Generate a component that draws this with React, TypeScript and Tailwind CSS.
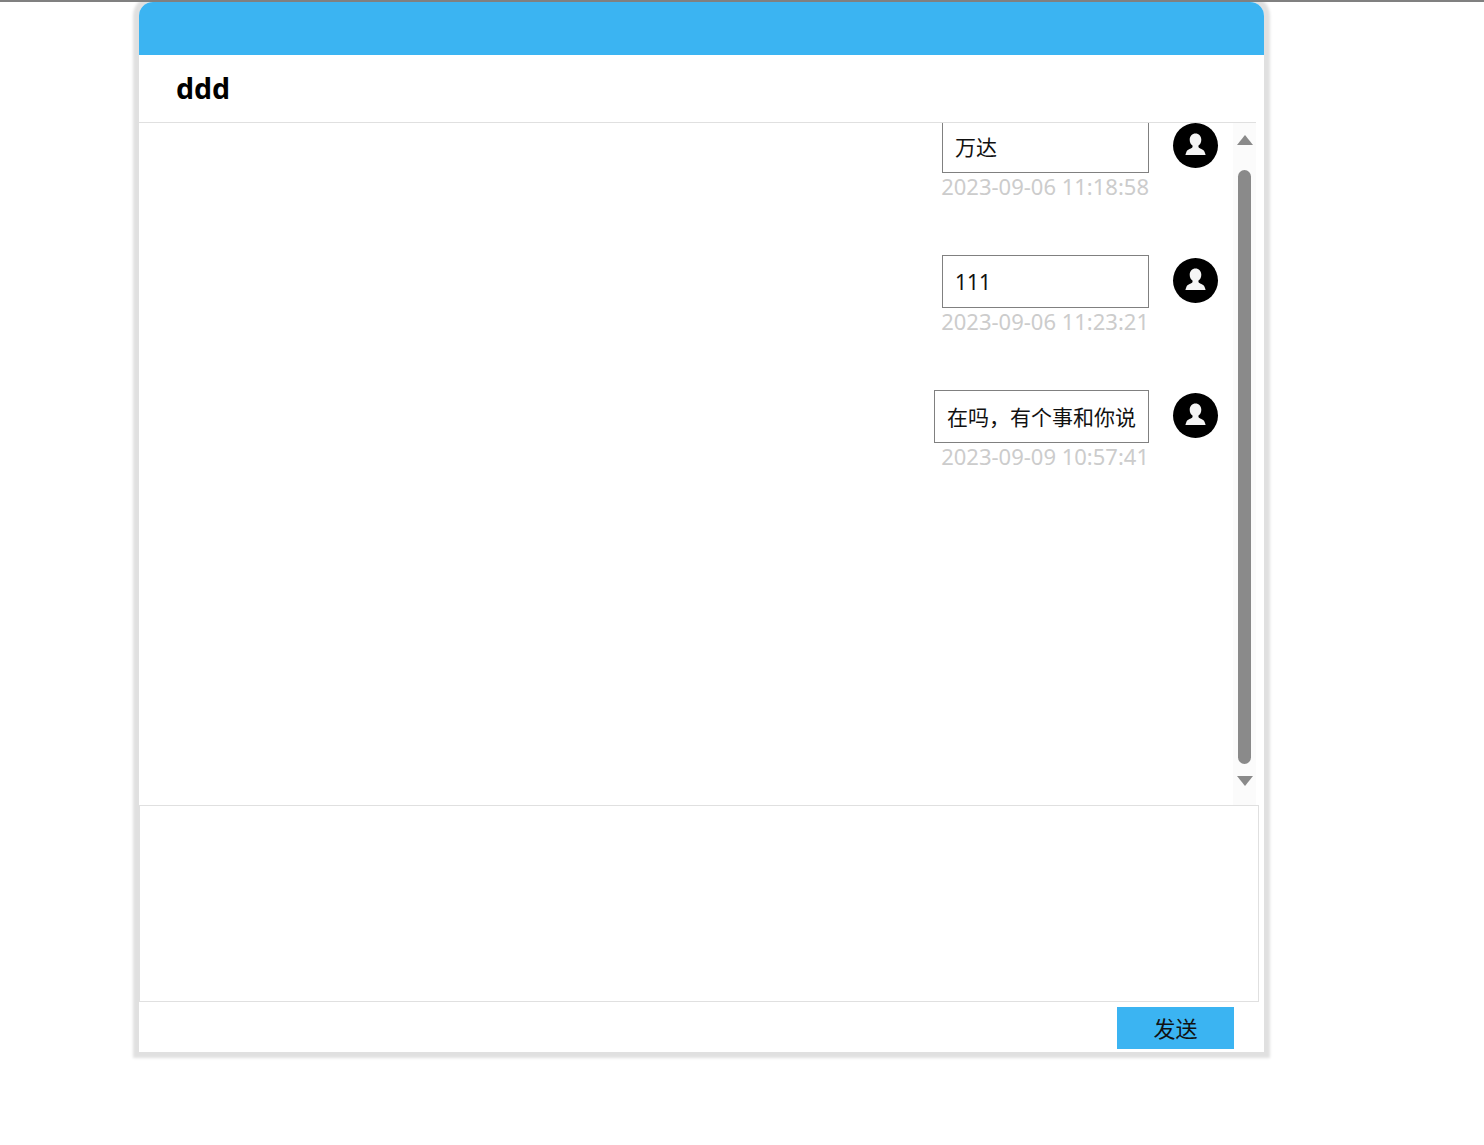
const FONT = "font-['Noto_Sans','Noto_Sans_CJK_SC',sans-serif]";

const messages = [
  { text: '万达', time: '2023-09-06 11:18:58' },
  { text: '111', time: '2023-09-06 11:23:21' },
  { text: '在吗，有个事和你说', time: '2023-09-09 10:57:41' },
];

function Avatar() {
  return (
    <div className="mt-[3px] ml-6 h-[45px] w-[45px] shrink-0 rounded-full bg-black">
      <svg viewBox="0 0 45 45" className="h-[45px] w-[45px]">
        <path
          d="M22.5 10.5c-3.3 0-5.8 2.7-5.8 6.2 0 2.5 1 4.6 2.8 5.9.2.9.1 1.6-.4 2.2-1.1 1-4.8 1.6-5.7 4.1-.4 1-.8 2-1 3.1h20.2c-.2-1.1-.6-2.1-1-3.1-.9-2.5-4.6-3.1-5.7-4.1-.5-.6-.6-1.3-.4-2.2 1.8-1.3 2.8-3.4 2.8-5.9 0-3.5-2.5-6.2-5.8-6.2z"
          fill="#f5f5f5"
        />
      </svg>
    </div>
  );
}

function Scrollbar() {
  return (
    <div className="flex w-[23px] shrink-0 flex-col items-center bg-[#fbfbfb]">
      <div className="mt-3 h-0 w-0 border-x-[8px] border-b-[10px] border-x-transparent border-b-[#8a8a8a]" />
      <div className="mt-[25px] h-[594px] w-[13px] rounded-full bg-[#8a8a8a]" />
      <div className="mt-3 h-0 w-0 border-x-[8px] border-t-[10px] border-x-transparent border-t-[#8a8a8a]" />
    </div>
  );
}

export default function App() {
  return (
    <div className={`min-h-[1145px] bg-white ${FONT}`}>
      <div className="relative z-10 h-[2px] bg-[#808080]" />
      <div className="ml-[139px] flex h-[1050px] w-[1125px] flex-col rounded-t-[14px] bg-white shadow-[0_0_3px_6px_#e0e0e0]">
        <div className="h-[53px] shrink-0 rounded-t-[14px] bg-[#3bb4f2]" />
        <div className="mr-2 flex h-[68px] shrink-0 items-center border-b border-[#e0e0e0] pl-[37px]">
          <h1 className="text-[28.5px] font-bold leading-none text-black">ddd</h1>
        </div>
        <div className="mr-2 flex h-[682px] shrink-0">
          <div className="flex-1 overflow-hidden pr-[15px]">
            <div className="-mt-[3px]">
              {messages.map((m) => (
                <div key={m.time} className="flex h-[135px] justify-end">
                  <div className="flex flex-col items-end">
                    <div className="flex h-[53px] min-w-[207px] items-center border border-[#808080] px-3 pt-[2px] text-[21px] text-[#111111]">
                      {m.text}
                    </div>
                    <div className="text-[22px] leading-[26px] text-[#cccccc]">{m.time}</div>
                  </div>
                  <Avatar />
                </div>
              ))}
            </div>
          </div>
          <Scrollbar />
        </div>
        <div className="mr-[5px] h-[197px] shrink-0 border border-[#e0e0e0]" />
        <div className="flex flex-1 justify-end pt-[5px] pr-[30px]">
          <button className="h-[42px] w-[117px] bg-[#3bb4f2] text-[22px] text-[#111111]">发送</button>
        </div>
      </div>
    </div>
  );
}
